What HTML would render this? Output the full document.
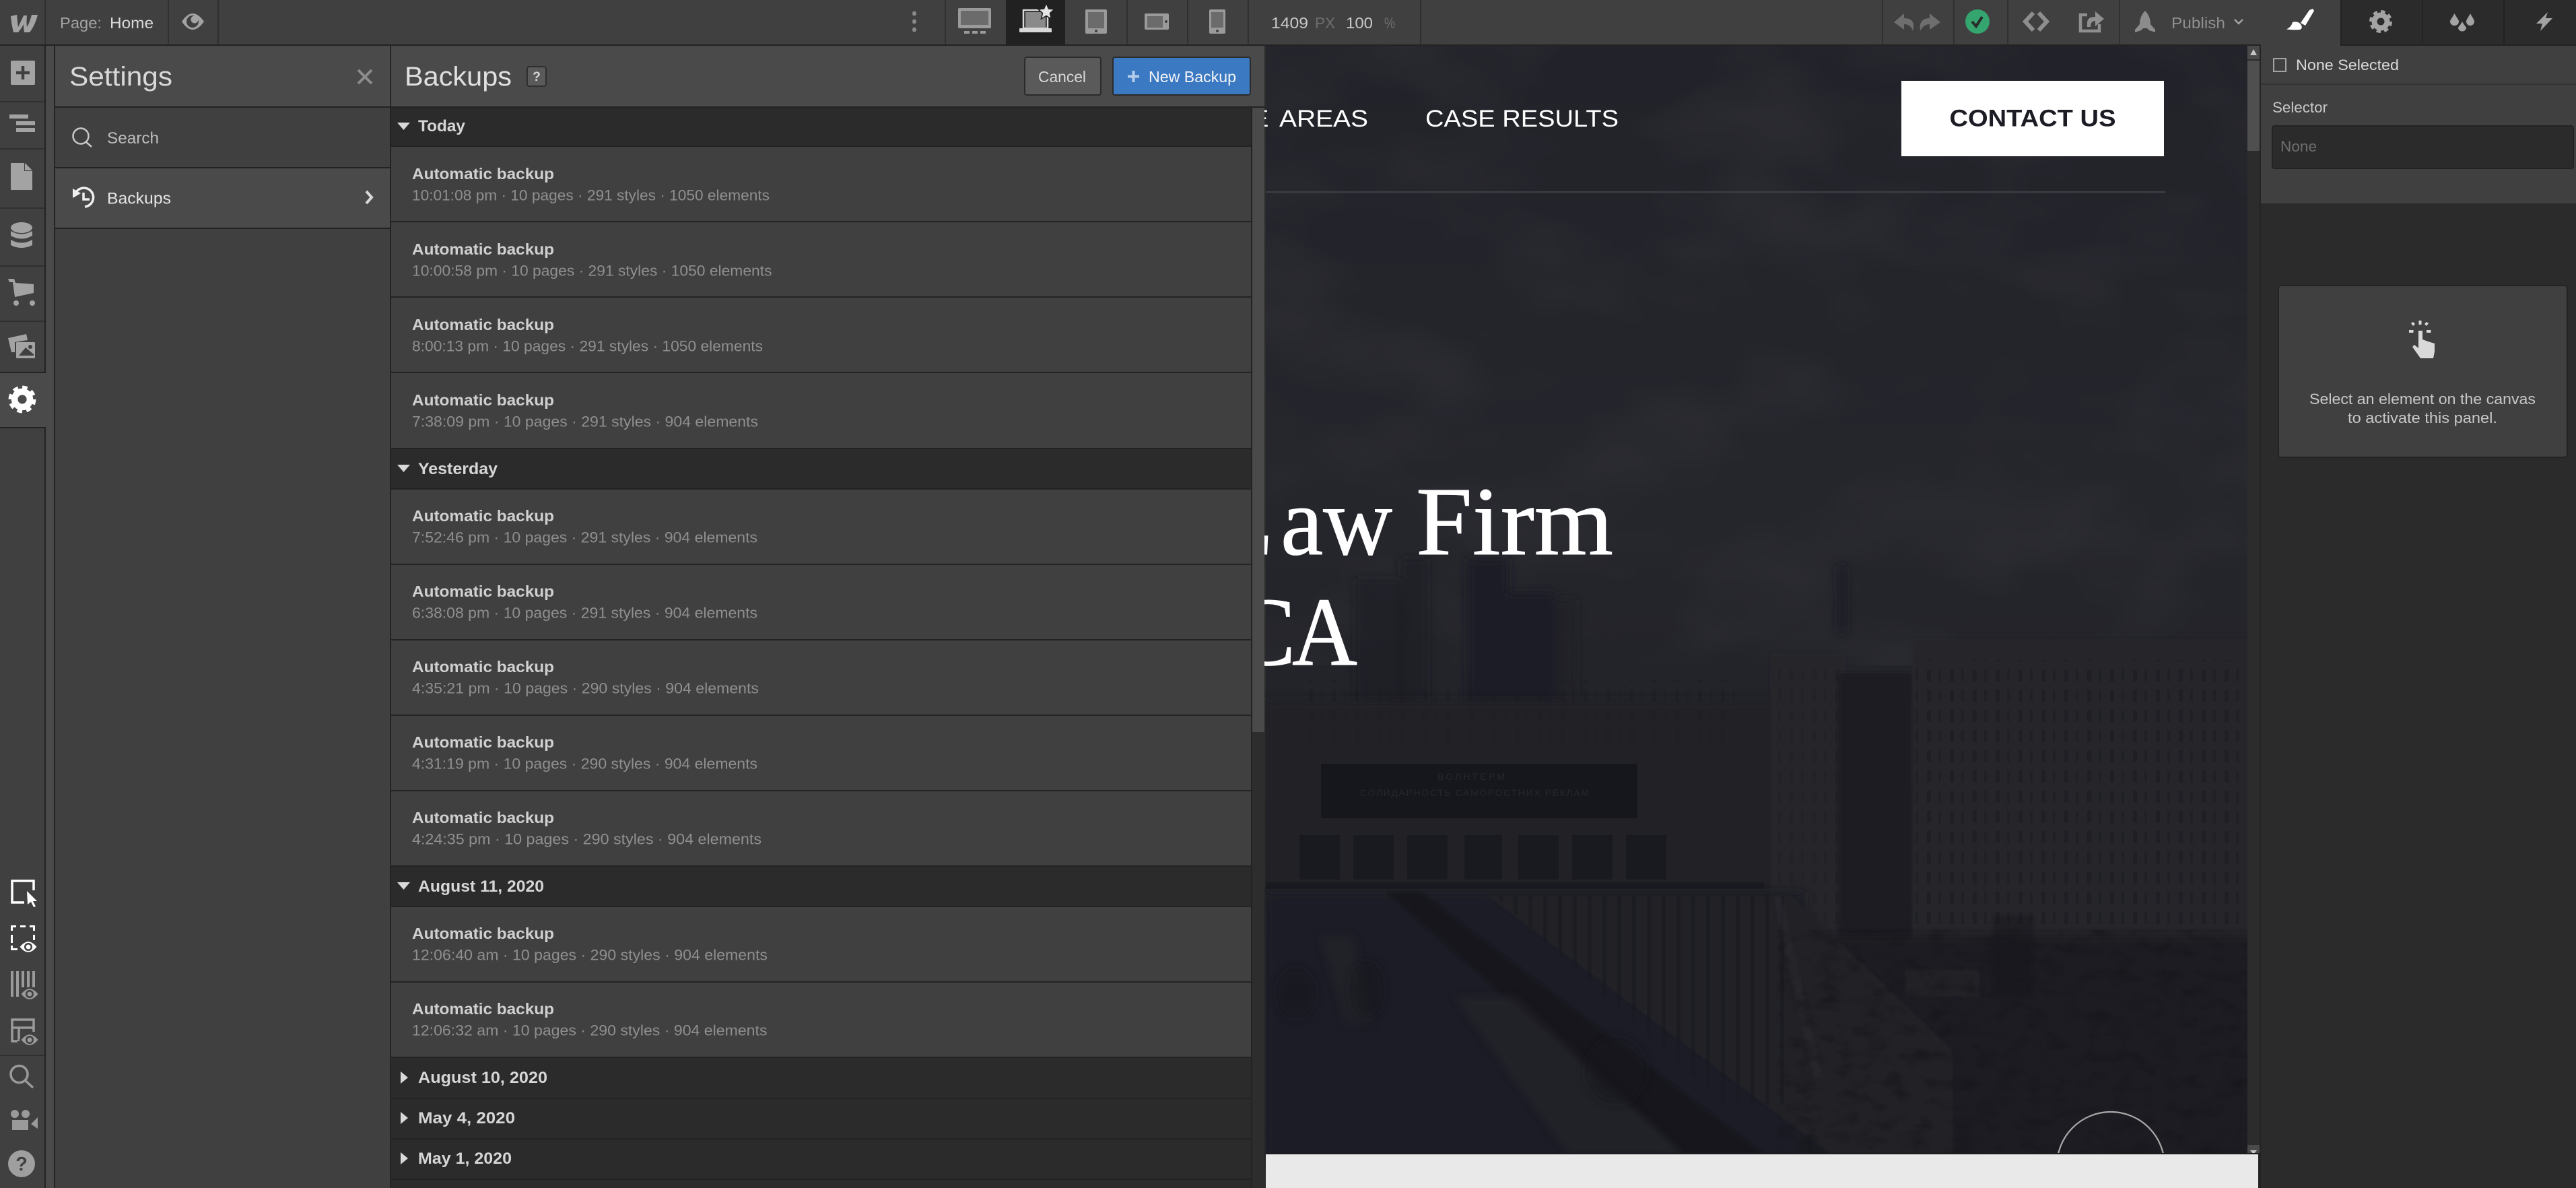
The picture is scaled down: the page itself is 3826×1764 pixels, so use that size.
<!DOCTYPE html>
<html lang="en"><head><meta charset="utf-8"><title>Webflow Designer – Backups</title>
<style>
html,body{margin:0;padding:0;background:#2b2b2b;width:3826px;height:1764px;overflow:hidden}
svg{display:block}
text{font-family:"Liberation Sans",sans-serif;white-space:pre}
.ti{font-size:23px;font-weight:700;fill:#d0d0d0}
.me{font-size:22px;fill:#8f8f8f}
.hd{font-size:24px;font-weight:700;fill:#d6d6d6}
.tb{font-size:23px}
.nav{font-size:35px;fill:#fff}
.h1{font-family:"Liberation Serif",serif;font-size:145px;fill:#fff;stroke:#fff;stroke-width:1}
</style></head><body>
<svg xmlns="http://www.w3.org/2000/svg" width="3826" height="1764" viewBox="0 0 3826 1764">
<defs>
<linearGradient id="bg" x1="0" y1="0" x2="0" y2="1"><stop offset="0" stop-color="#22232a"/><stop offset=".42" stop-color="#25262c"/><stop offset=".72" stop-color="#202127"/><stop offset="1" stop-color="#1b1c23"/></linearGradient>
<filter id="b6"><feGaussianBlur stdDeviation="6"/></filter>
<filter id="b2"><feGaussianBlur stdDeviation="2"/></filter>
<filter id="cloud" x="0" y="0" width="100%" height="100%" color-interpolation-filters="sRGB"><feTurbulence type="fractalNoise" baseFrequency="0.004 0.007" numOctaves="3" seed="7"/><feColorMatrix values="0 0 0 0 .19  0 0 0 0 .19  0 0 0 0 .21  1.4 0 0 0 -.62"/></filter>
<filter id="mot" x="0" y="0" width="100%" height="100%" color-interpolation-filters="sRGB"><feTurbulence type="fractalNoise" baseFrequency="0.03 0.05" numOctaves="3" seed="3"/><feColorMatrix values="0 0 0 0 .08  0 0 0 0 .08  0 0 0 0 .10  1.5 0 0 0 -.68"/></filter>
<pattern id="win" width="34" height="30" patternUnits="userSpaceOnUse"><rect x="6" y="4" width="6" height="18" fill="#1a1b21"/><rect x="23" y="4" width="4" height="18" fill="#1c1d23"/></pattern>
<pattern id="stripe" width="22" height="40" patternUnits="userSpaceOnUse"><rect x="4" width="6" height="40" fill="#17181e"/></pattern>
<g id="gr"><circle r="9.5" fill="none" stroke-width="8"/><circle r="14" fill="none" stroke-width="6" stroke-dasharray="6 4.995"/></g>
<g id="dk"><path d="M-14 0Q0-18 14 0Q0 18-14 0Z" stroke-width="2.500" stroke="#404040"/><circle r="6" fill="#404040"/><circle r="3.500"/></g>
</defs>

<!-- canvas -->
<rect x="1880" y="68" width="1476" height="1696" fill="url(#bg)"/>
<rect x="1880" y="68" width="1476" height="920" filter="url(#cloud)"/>
<g filter="url(#b6)" fill="#1e1f26">
<rect x="2013" y="860" width="70" height="240" opacity=".65"/><rect x="2080" y="830" width="40" height="270" opacity=".65"/><rect x="2180" y="830" width="60" height="270"/><rect x="2240" y="880" width="70" height="220"/><rect x="2310" y="890" width="30" height="210" opacity=".8"/>
<rect x="2730" y="840" width="12" height="100"/>
</g>
<rect x="1880" y="1040" width="960" height="300" fill="#202127" filter="url(#b6)"/>
<rect x="1930" y="1010" width="650" height="110" fill="url(#win)" opacity=".4"/>
<rect x="2630" y="970" width="110" height="430" fill="#26272c" filter="url(#b2)"/>
<rect x="2730" y="1000" width="110" height="400" fill="#1c1d23" filter="url(#b2)"/>
<rect x="2840" y="950" width="500" height="450" fill="#25262b" filter="url(#b2)"/>
<rect x="2845" y="980" width="490" height="400" fill="url(#win)" opacity=".6"/>
<rect x="2630" y="980" width="105" height="400" fill="url(#win)" opacity=".35"/>
<rect x="1962" y="1134" width="470" height="81" fill="#16171d"/>
<text x="2135" y="1158" font-size="14" fill="#26272c" textLength="100">ВОЛНТЕРМ</text>
<text x="2020" y="1182" font-size="14" fill="#26272c" textLength="340">СОЛИДАРНОСТЬ САМОРОСТНИХ РЕКЛАМ</text>
<g fill="#191a20"><rect x="1930" y="1240" width="60" height="66"/><rect x="2010" y="1240" width="60" height="66"/><rect x="2090" y="1240" width="60" height="66"/><rect x="2175" y="1240" width="56" height="66"/><rect x="2255" y="1240" width="60" height="66"/><rect x="2335" y="1240" width="60" height="66"/><rect x="2415" y="1240" width="60" height="66"/></g>
<rect x="1880" y="1310" width="740" height="10" fill="#1a1b21"/>
<!-- lower scene -->
<rect x="1880" y="1325" width="800" height="400" fill="#1d1e25" filter="url(#b6)"/>
<path d="M2680 1390H3356V1720H2900Z" fill="#1b1c22" filter="url(#b6)"/>
<path d="M2210 1330H2660L2900 1560V1714H2720Z" fill="#212228" filter="url(#b2)"/>
<path d="M2220 1330H2650V1640H2560Z" fill="url(#stripe)" opacity=".55"/>
<path d="M2060 1325L2500 1714H2620L2110 1325Z" fill="#17181d" filter="url(#b2)"/>
<path d="M2160 1480L2330 1714H2500L2250 1480Z" fill="#26272c" opacity=".55" filter="url(#b6)"/>
<path d="M1960 1390L2000 1520H2040L2010 1390Z" fill="#25262b" opacity=".5" filter="url(#b6)"/>
<g fill="#14151a" opacity=".5" filter="url(#b6)"><ellipse cx="1925" cy="1475" rx="30" ry="38"/><ellipse cx="2030" cy="1470" rx="26" ry="44"/><ellipse cx="2400" cy="1590" rx="46" ry="50"/></g>
<path d="M2640 1330L2700 1600" stroke="#2a2b30" stroke-width="12" opacity=".5" filter="url(#b2)"/>
<rect x="2830" y="1440" width="110" height="40" fill="#25262b" opacity=".6" filter="url(#b2)"/>
<rect x="2960" y="1360" width="60" height="120" fill="#17181e" opacity=".5" filter="url(#b2)"/>
<rect x="2640" y="1380" width="700" height="334" filter="url(#mot)"/>

<!-- site content -->
<text class="nav" x="1851" y="188" textLength="34" lengthAdjust="spacingAndGlyphs">E</text>
<text class="nav" x="1900" y="188" textLength="132" lengthAdjust="spacingAndGlyphs">AREAS</text>
<text class="nav" x="2117" y="188" textLength="287" lengthAdjust="spacingAndGlyphs">CASE RESULTS</text>
<rect x="1880" y="284" width="1336" height="2.5" fill="#3c3d42"/>
<rect x="2824" y="120" width="390" height="112" fill="#fff"/>
<text x="2895.5" y="187.5" font-size="35" font-weight="700" fill="#1b1c24" textLength="247" lengthAdjust="spacingAndGlyphs">CONTACT US</text>
<text class="h1" x="1803" y="823">L</text>
<text class="h1" x="1902" y="823" textLength="166" lengthAdjust="spacingAndGlyphs">aw</text>
<text class="h1" x="2103" y="823" textLength="293" lengthAdjust="spacingAndGlyphs">Firm</text>
<text class="h1" x="1828" y="987">C</text>
<text class="h1" x="1919" y="987" textLength="97" lengthAdjust="spacingAndGlyphs">A</text>
<circle cx="3135" cy="1731" r="80" fill="none" stroke="#a8a8a8" stroke-width="2.2"/>
<!-- canvas scrollbar -->
<rect x="3338" y="68" width="18" height="1646" fill="#2c2c2c"/>
<rect x="3338" y="68" width="18" height="20" fill="#4a4a4a"/><path d="M3347 73l-5 9h10z" fill="#c4c4c4"/>
<rect x="3338" y="90" width="18" height="134" fill="#4f4f4f"/>
<rect x="3338" y="1700" width="18" height="14" fill="#4a4a4a"/><path d="M3342 1708h10l-5 6z" fill="#c4c4c4"/>
<rect x="1880" y="1712" width="1476" height="2" fill="#1c1c1c"/>
<rect x="1880" y="1714" width="1474" height="50" fill="#e9e9e9"/>
<rect x="3354" y="1712" width="4" height="52" fill="#232323"/>
<rect x="3356" y="68" width="2" height="1696" fill="#232323"/>

<!-- top bar -->
<rect width="3358" height="66" fill="#404040"/><rect y="66" width="3358" height="2" fill="#232323"/>
<g fill="#303030"><rect x="66" width="2" height="66"/><rect x="249" width="2" height="66"/><rect x="323" width="2" height="66"/><rect x="1403" width="2" height="66"/><rect x="1673" width="2" height="66"/><rect x="1763" width="2" height="66"/><rect x="1853" width="2" height="66"/><rect x="2109" width="2" height="66"/><rect x="2795" width="2" height="66"/><rect x="2901" width="2" height="66"/><rect x="2981" width="2" height="66"/><rect x="3147" width="2" height="66"/></g>
<path d="M16 24L25 22Q26 34 27 40Q32 30 35 23L40 23Q39 33 40 40Q44 34 47 22L56 22Q52 38 44 48L36 48Q35 41 35 36Q32 42 27 48L20 48Q17 36 16 24Z" fill="#a3a3a3"/>
<text class="tb" x="89" y="42" fill="#a3a3a3" textLength="62" lengthAdjust="spacingAndGlyphs">Page:</text>
<text class="tb" x="163" y="42" fill="#d9d9d9" textLength="65" lengthAdjust="spacingAndGlyphs">Home</text>
<path d="M270 32Q286 8 303 32Q286 56 270 32Z" fill="#a3a3a3"/><circle cx="286" cy="32" r="9" fill="#404040"/><circle cx="289" cy="29" r="5.5" fill="#a3a3a3"/>
<g fill="#8a8a8a"><ellipse cx="1358" cy="20" rx="3" ry="3.5"/><ellipse cx="1358" cy="32" rx="3" ry="3.5"/><ellipse cx="1358" cy="44" rx="3" ry="3.5"/></g>
<!-- devices -->
<rect x="1423" y="12" width="49" height="30" rx="2" fill="#9a9a9a"/><rect x="1427" y="16" width="41" height="21" fill="#6b6b6b"/>
<g fill="#9a9a9a"><rect x="1432" y="46" width="8" height="4"/><rect x="1444" y="46" width="8" height="4"/><rect x="1456" y="46" width="8" height="4"/></g>
<rect x="1494" width="88" height="66" fill="#212121"/>
<rect x="1520" y="15" width="36" height="27" fill="none" stroke="#d9d9d9" stroke-width="2.5"/><rect x="1523" y="18" width="30" height="23" fill="#8a8a8a"/>
<rect x="1514" y="42" width="48" height="6" rx="1" fill="#d9d9d9"/>
<path d="M1554 5l3.5 8 8.5.8-6.5 5.7 2 8.5-7.5-4.5-7.5 4.5 2-8.5-6.5-5.7 8.500-.8z" fill="#e4e4e4" stroke="#212121" stroke-width="1.5"/>
<rect x="1612" y="14" width="32" height="36" rx="2" fill="#9a9a9a"/><rect x="1616" y="18" width="24" height="24" fill="#6b6b6b"/><circle cx="1628" cy="46" r="2" fill="#404040"/>
<rect x="1700" y="20" width="36" height="24" rx="2" fill="#9a9a9a"/><rect x="1704" y="24" width="23" height="17" fill="#6b6b6b"/><circle cx="1732" cy="32" r="2" fill="#404040"/>
<rect x="1796" y="14" width="24" height="36" rx="2" fill="#9a9a9a"/><rect x="1799" y="18" width="18" height="23" fill="#6b6b6b"/><circle cx="1808" cy="46" r="2" fill="#404040"/>
<text class="tb" x="1888" y="42" fill="#c8c8c8" textLength="55" lengthAdjust="spacingAndGlyphs">1409</text>
<text class="tb" x="1953" y="42" fill="#6e6e6e" textLength="30" lengthAdjust="spacingAndGlyphs">PX</text>
<text class="tb" x="1999" y="42" fill="#c8c8c8" textLength="40" lengthAdjust="spacingAndGlyphs">100</text>
<text class="tb" x="2056" y="42" fill="#6e6e6e" textLength="16" lengthAdjust="spacingAndGlyphs">%</text>
<!-- right topbar tools -->
<path d="M2828 20L2813 33L2828 44V36Q2838 36 2841 46Q2846 27 2828 27Z" fill="#6e6e6e"/>
<path d="M2866 20L2882 33L2866 44V36Q2857 36 2852 46Q2849 27 2866 27Z" fill="#6e6e6e"/>
<ellipse cx="2937" cy="32" rx="18" ry="18" fill="#34a56e"/><path d="M2929 32l6 7 9-14" fill="none" stroke="#2b2b2b" stroke-width="4"/>
<path d="M3020 19L3008 32L3020 45M3028 19L3040 32L3028 45" fill="none" stroke="#8f8f8f" stroke-width="6"/>
<path d="M3118 36V46H3090V22H3100" fill="none" stroke="#8f8f8f" stroke-width="4.500"/>
<path d="M3100 40V34Q3100 25 3112 25V17L3125 28L3112 39V31Q3105 31 3105 40Z" fill="#8f8f8f"/>
<path d="M3186 16Q3178 24 3178 36L3171 44V48L3180 45L3183 42H3189L3192 45L3201 48V44L3194 36Q3194 24 3186 16Z" fill="#8c8c8c"/>
<text class="tb" x="3225" y="42" fill="#8f8f8f" textLength="80" lengthAdjust="spacingAndGlyphs">Publish</text>
<path d="M3319 29l6 6 6-6" fill="none" stroke="#a3a3a3" stroke-width="2.5"/>

<!-- right panel -->
<rect x="3358" width="468" height="1764" fill="#2b2b2b"/>
<rect x="3358" y="68" width="468" height="234" fill="#404040"/>
<rect x="3358" width="119" height="70" fill="#404040"/>
<rect x="3477" y="66" width="349" height="2" fill="#232323"/>
<g fill="#232323"><rect x="3476" width="2" height="68"/><rect x="3597" width="2" height="66"/><rect x="3718" width="2" height="66"/></g>
<path d="M3430 15l5-2 2 3-13 22-7-4Z" fill="#fff"/><path d="M3405 33q8-2 12 3q4 6-1 8q-8 1-20-.500q7-3 9-10.500Z" fill="#fff"/>
<use href="#gr" x="3536" y="32" stroke="#a3a3a3"/>
<g fill="#a3a3a3"><path d="M3645.500 20c3 6 6.500 9 6.500 12a6.500 6 0 0 1-13 0c0-3 3.500-6 6.500-12Z"/><path d="M3669 20c3 6 6 9 6 12a6 6 0 0 1-12 0c0-3 3-6 6-12Z"/><path d="M3657 32c3 6 6 8 6 9a6 5.500 0 0 1-12 0c0-1 3-3 6-9Z"/></g>
<path d="M3784 18L3767 35H3776L3773 46L3791 27H3781Z" fill="#a3a3a3"/>
<rect x="3377" y="87" width="18" height="19" fill="none" stroke="#a3a3a3" stroke-width="2"/>
<text x="3410" y="104" style="font-size:22px" fill="#d9d9d9" textLength="153" lengthAdjust="spacingAndGlyphs">None Selected</text>
<rect x="3358" y="124" width="468" height="2" fill="#333"/>
<text x="3375" y="167" font-size="22" fill="#c8c8c8" textLength="82" lengthAdjust="spacingAndGlyphs">Selector</text>
<rect x="3375" y="187" width="447" height="63" rx="3" fill="#2b2b2b" stroke="#232323" stroke-width="2"/>
<text x="3387" y="225" font-size="22" fill="#6e6e6e" textLength="54" lengthAdjust="spacingAndGlyphs">None</text>
<rect x="3384" y="424" width="429" height="255" rx="4" fill="#404040" stroke="#232323" stroke-width="2"/>
<path d="M3592 491h6v13l8 3 10 3v12l-2 10h-19l-12-17 3-3 6 5Z" fill="#d9d9d9"/>
<g fill="#d9d9d9"><rect x="3592.500" y="476" width="4" height="6"/><rect x="3578" y="490" width="6.500" height="4"/><rect x="3604" y="490" width="6.500" height="4"/><path d="M3581 480l3-2 3 3-3 3zM3604 478l3 2-3 4-3-3z"/></g>
<text x="3430" y="600" font-size="22" fill="#c8c8c8" textLength="336" lengthAdjust="spacingAndGlyphs">Select an element on the canvas</text>
<text x="3487" y="628" font-size="22" fill="#c8c8c8" textLength="222" lengthAdjust="spacingAndGlyphs">to activate this panel.</text>

<!-- left sidebar -->
<rect y="68" width="66" height="1696" fill="#404040"/>
<rect x="68" y="68" width="12" height="1696" fill="#4a4a4a"/>
<rect x="80" y="68" width="2" height="1696" fill="#232323"/>
<rect x="66" y="68" width="2" height="484" fill="#232323"/><rect x="66" y="636" width="2" height="1128" fill="#232323"/>
<g fill="#303030"><rect y="150" width="66" height="2"/><rect y="220" width="66" height="2"/><rect y="308" width="66" height="2"/><rect y="394" width="66" height="2"/><rect y="476" width="66" height="2"/><rect y="1566" width="66" height="2"/></g>
<rect x="16" y="90" width="36" height="36" rx="2" fill="#a3a3a3"/><path d="M24 108h20M34 98v20" stroke="#404040" stroke-width="4.500"/>
<g fill="#a3a3a3"><rect x="14" y="170" width="28" height="6"/><rect x="24" y="180" width="28" height="6"/><rect x="24" y="190" width="28" height="6"/></g>
<path d="M16 242H36L48 254V282H16Z" fill="#a3a3a3"/><path d="M36 241L49 254H36Z" fill="#404040"/><path d="M37 242L48 253H37Z" fill="#a3a3a3"/>
<g fill="#a3a3a3"><ellipse cx="32" cy="338" rx="16" ry="8"/><path d="M16 343q16 9 32 0v7q-16 9-32 0Z"/><path d="M16 356q16 9 32 0v8q-16 8-32 0Z"/></g>
<g fill="#a3a3a3"><path d="M12 414H21L23 420L50 422V435L22 441L19 419H14Z"/><circle cx="24" cy="450" r="4"/><circle cx="48" cy="450" r="4"/></g>
<g fill="#a3a3a3"><path d="M12 502L39 496L41 505L22 508V523H17Z"/><rect x="24" y="508" width="28" height="24" rx="1.500"/></g><path d="M28 528L38 516L50 526V528Z" fill="#404040"/><circle cx="45" cy="515" r="3" fill="#404040"/>
<rect y="552" width="68" height="2" fill="#232323"/><rect y="554" width="80" height="80" fill="#4a4a4a"/><rect y="634" width="68" height="2" fill="#232323"/>
<g transform="translate(33 593) scale(1.2)"><use href="#gr" stroke="#fff"/></g>
<path d="M34 1308H18V1340H36M50 1322V1308H34" fill="none" stroke="#fff" stroke-width="3.500"/>
<path d="M40 1323L55 1338L49 1338L53 1346L50 1347L46 1339L41 1343Z" fill="#fff"/>
<g fill="#fff"><path d="M16 1374h8v3h-5v5h-3zM30 1374h8v3h-8zM44 1374h8v8h-3v-5h-5zM16 1388h3v12h-3zM49 1388h3v8h-3zM16 1404h3v4h7v3h-10z"/></g>
<g transform="translate(42 1406)" fill="#fff"><use href="#dk"/></g>
<g fill="#9a9a9a"><rect x="16" y="1442" width="4" height="38"/><rect x="24" y="1442" width="4" height="38"/><rect x="32" y="1442" width="4" height="24"/><rect x="40" y="1442" width="4" height="24"/><rect x="48" y="1442" width="4" height="24"/></g>
<g transform="translate(44 1476)" fill="#9a9a9a"><use href="#dk"/></g>
<path d="M26 1546H18V1514H50V1532M18 1526H50M28 1526V1546" fill="none" stroke="#9a9a9a" stroke-width="3.500"/>
<g transform="translate(44 1544)" fill="#9a9a9a"><use href="#dk"/></g>
<circle cx="28.500" cy="1595" r="12.500" fill="none" stroke="#9a9a9a" stroke-width="3.500"/><path d="M37 1604L49 1615" stroke="#9a9a9a" stroke-width="3.500"/>
<g fill="#9a9a9a"><circle cx="22" cy="1654" r="6"/><circle cx="38" cy="1654" r="6"/><rect x="18" y="1663" width="24" height="15"/><path d="M46 1669L56 1659V1676Z"/></g>
<circle cx="32" cy="1728" r="20" fill="#9f9f9f"/><text x="32" y="1738" font-size="29" font-weight="700" fill="#404040" text-anchor="middle">?</text>

<!-- settings panel -->
<rect x="82" y="68" width="497" height="1696" fill="#404040"/>
<rect x="82" y="68" width="497" height="90" fill="#4a4a4a"/><rect x="82" y="158" width="497" height="2" fill="#232323"/>
<text x="103" y="127" font-size="40" fill="#d9d9d9" textLength="153" lengthAdjust="spacingAndGlyphs">Settings</text>
<path d="M532 104L552 124M552 104L532 124" stroke="#8c8c8c" stroke-width="4"/>
<rect x="82" y="248" width="497" height="2" fill="#232323"/>
<circle cx="120" cy="202" r="11.500" fill="none" stroke="#c8c8c8" stroke-width="2.500"/><path d="M128 211L136 218" stroke="#c8c8c8" stroke-width="2.500"/>
<text x="159" y="213" font-size="24" fill="#bdbdbd" textLength="77" lengthAdjust="spacingAndGlyphs">Search</text>
<rect x="82" y="250" width="497" height="88" fill="#4a4a4a"/><rect x="82" y="338" width="497" height="2" fill="#232323"/>
<path d="M112 287A14 14 0 1 1 126 307" fill="none" stroke="#f0f0f0" stroke-width="3.500"/><path d="M108 280L120 287L108 294Z" fill="#f0f0f0"/><path d="M124 286V296H133" fill="none" stroke="#f0f0f0" stroke-width="3.500"/>
<text x="159" y="302.500" font-size="24" fill="#e6e6e6" textLength="95" lengthAdjust="spacingAndGlyphs">Backups</text>
<path d="M544 284L552 293L544 302" fill="none" stroke="#d9d9d9" stroke-width="4"/>
<rect x="579" y="68" width="2" height="1696" fill="#232323"/>

<!-- backups panel -->
<rect x="581" y="68" width="1297" height="1696" fill="#404040"/>
<rect x="581" y="68" width="1297" height="90" fill="#4a4a4a"/><rect x="581" y="158" width="1297" height="2" fill="#232323"/>
<text x="601" y="127" font-size="40" fill="#e0e0e0" textLength="159" lengthAdjust="spacingAndGlyphs">Backups</text>
<rect x="783" y="99" width="28" height="29" rx="3" fill="#5a5a5a" stroke="#2f2f2f" stroke-width="2"/><text x="797" y="120" font-size="19" font-weight="700" fill="#d9d9d9" text-anchor="middle">?</text>
<rect x="1522" y="85" width="113" height="56" rx="3" fill="#5a5a5a" stroke="#2b2b2b" stroke-width="2"/>
<text x="1542" y="122" font-size="23" fill="#d9d9d9" textLength="71" lengthAdjust="spacingAndGlyphs">Cancel</text>
<rect x="1653" y="85" width="204" height="56" rx="3" fill="#3b79c3" stroke="#2b2b2b" stroke-width="2"/>
<path d="M1683.500 105v17M1675 113.500h17" stroke="#b5cdec" stroke-width="4"/>
<text x="1706" y="122" font-size="23" fill="#f4f4f4" textLength="130" lengthAdjust="spacingAndGlyphs">New Backup</text>
<rect x="1858" y="160" width="2" height="1604" fill="#232323"/>
<rect x="1860" y="160" width="18" height="927" fill="#4a4a4a"/><rect x="1860" y="1087" width="18" height="677" fill="#2d2d2d"/>

<!-- list -->
<g fill="#232323">
<rect x="581" y="328" width="1277" height="2"/><rect x="581" y="440" width="1277" height="2"/><rect x="581" y="552" width="1277" height="2"/><rect x="581" y="665" width="1277" height="2"/>
<rect x="581" y="837" width="1277" height="2"/><rect x="581" y="949" width="1277" height="2"/><rect x="581" y="1061" width="1277" height="2"/><rect x="581" y="1173" width="1277" height="2"/><rect x="581" y="1285" width="1277" height="2"/>
<rect x="581" y="1457" width="1277" height="2"/><rect x="581" y="1569" width="1277" height="2"/>
</g>
<g fill="#2b2b2b">
<rect x="581" y="160" width="1277" height="56"/><rect x="581" y="667" width="1277" height="58"/><rect x="581" y="1287" width="1277" height="58"/><rect x="581" y="1571" width="1277" height="193"/>
</g>
<g fill="#232323">
<rect x="581" y="216" width="1277" height="2"/><rect x="581" y="725" width="1277" height="2"/><rect x="581" y="1345" width="1277" height="2"/><rect x="581" y="1630" width="1277" height="2"/><rect x="581" y="1690" width="1277" height="2"/><rect x="581" y="1750" width="1277" height="2"/>
</g>
<g fill="#d9d9d9">
<path d="M590 182H609L599.500 193Z"/><path d="M590 690H609L599.500 701Z"/><path d="M590 1310H609L599.500 1321Z"/>
<path d="M595 1591L606 1600L595 1609Z"/><path d="M595 1651L606 1660L595 1669Z"/><path d="M595 1711L606 1720L595 1729Z"/>
</g>
<text class="hd" x="621" y="195" textLength="70" lengthAdjust="spacingAndGlyphs">Today</text>
<text class="hd" x="621" y="704" textLength="118" lengthAdjust="spacingAndGlyphs">Yesterday</text>
<text class="hd" x="621" y="1324" textLength="187" lengthAdjust="spacingAndGlyphs">August 11, 2020</text>
<text class="hd" x="621" y="1608" textLength="192" lengthAdjust="spacingAndGlyphs">August 10, 2020</text>
<text class="hd" x="621" y="1668" textLength="144" lengthAdjust="spacingAndGlyphs">May 4, 2020</text>
<text class="hd" x="621" y="1728" textLength="139" lengthAdjust="spacingAndGlyphs">May 1, 2020</text>

<text class="ti" x="612" y="266" textLength="211" lengthAdjust="spacingAndGlyphs">Automatic backup</text>
<text class="me" x="612" y="297.500" textLength="531" lengthAdjust="spacingAndGlyphs">10:01:08 pm · 10 pages · 291 styles · 1050 elements</text>
<text class="ti" x="612" y="378" textLength="211" lengthAdjust="spacingAndGlyphs">Automatic backup</text>
<text class="me" x="612" y="409.500" textLength="534.500" lengthAdjust="spacingAndGlyphs">10:00:58 pm · 10 pages · 291 styles · 1050 elements</text>
<text class="ti" x="612" y="490" textLength="211" lengthAdjust="spacingAndGlyphs">Automatic backup</text>
<text class="me" x="612" y="521.500" textLength="521" lengthAdjust="spacingAndGlyphs">8:00:13 pm · 10 pages · 291 styles · 1050 elements</text>
<text class="ti" x="612" y="602" textLength="211" lengthAdjust="spacingAndGlyphs">Automatic backup</text>
<text class="me" x="612" y="633.500" textLength="514" lengthAdjust="spacingAndGlyphs">7:38:09 pm · 10 pages · 291 styles · 904 elements</text>

<text class="ti" x="612" y="774" textLength="211" lengthAdjust="spacingAndGlyphs">Automatic backup</text>
<text class="me" x="612" y="805.500" textLength="513" lengthAdjust="spacingAndGlyphs">7:52:46 pm · 10 pages · 291 styles · 904 elements</text>
<text class="ti" x="612" y="886" textLength="211" lengthAdjust="spacingAndGlyphs">Automatic backup</text>
<text class="me" x="612" y="917.500" textLength="513" lengthAdjust="spacingAndGlyphs">6:38:08 pm · 10 pages · 291 styles · 904 elements</text>
<text class="ti" x="612" y="998" textLength="211" lengthAdjust="spacingAndGlyphs">Automatic backup</text>
<text class="me" x="612" y="1029.500" textLength="515" lengthAdjust="spacingAndGlyphs">4:35:21 pm · 10 pages · 290 styles · 904 elements</text>
<text class="ti" x="612" y="1110" textLength="211" lengthAdjust="spacingAndGlyphs">Automatic backup</text>
<text class="me" x="612" y="1141.500" textLength="513" lengthAdjust="spacingAndGlyphs">4:31:19 pm · 10 pages · 290 styles · 904 elements</text>
<text class="ti" x="612" y="1222" textLength="211" lengthAdjust="spacingAndGlyphs">Automatic backup</text>
<text class="me" x="612" y="1253.500" textLength="519" lengthAdjust="spacingAndGlyphs">4:24:35 pm · 10 pages · 290 styles · 904 elements</text>

<text class="ti" x="612" y="1394" textLength="211" lengthAdjust="spacingAndGlyphs">Automatic backup</text>
<text class="me" x="612" y="1425.500" textLength="528" lengthAdjust="spacingAndGlyphs">12:06:40 am · 10 pages · 290 styles · 904 elements</text>
<text class="ti" x="612" y="1506" textLength="211" lengthAdjust="spacingAndGlyphs">Automatic backup</text>
<text class="me" x="612" y="1537.500" textLength="527.500" lengthAdjust="spacingAndGlyphs">12:06:32 am · 10 pages · 290 styles · 904 elements</text>
</svg>
</body></html>
